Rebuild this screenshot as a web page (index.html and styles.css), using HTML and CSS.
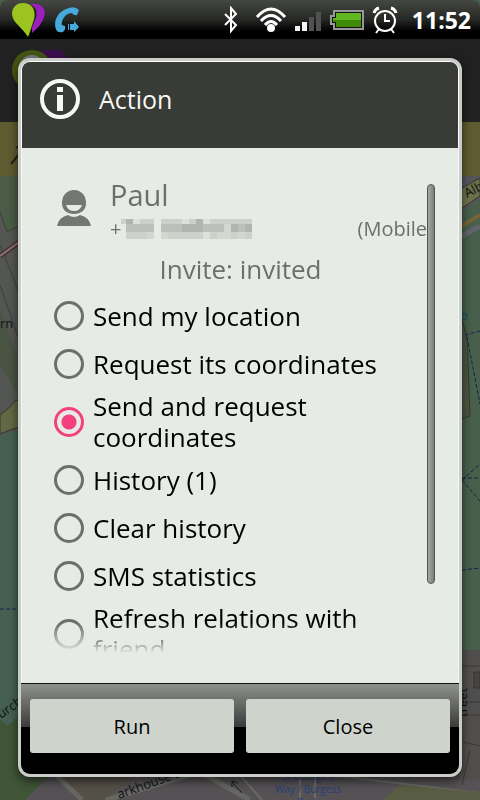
FILE: index.html
```html
<!doctype html>
<html lang="en">
<head>
  <meta charset="utf-8">
  <meta name="viewport" content="width=device-width, initial-scale=1">
  <title>Action</title>
  <link rel="stylesheet" href="styles.css">
</head>
<body>
  <svg class="backdrop" viewBox="0 0 480 800" preserveAspectRatio="xMidYMid slice" aria-hidden="true">
    <rect width="480" height="800" fill="#475f4b"/>
    <!-- map, left edge -->
    <path d="M0 176H40V440H0z" fill="#545653"/>
    <path d="M0 176H40V222L7 232L0 212z" fill="#4a5c46"/>
    <path d="M0 212L7 232L40 215M0 245L40 345M0 285L26 360" fill="none" stroke="#3a4038"/>
    <path d="M0 310L30 390L30 415L0 365z" fill="#4a5443"/>
    <path d="M0 256L22 240" stroke="#4c2e2e" stroke-width="5"/>
    <path d="M0 256L22 240" stroke="#807878" stroke-width="2"/>
    <path d="M0 415L10 407L15 401L30 396V424L10 430L0 434z" fill="#626744" stroke="#353b28"/>
    <path d="M0 436L30 425V800H0z" fill="#456052"/>
    <path d="M0 609H22" stroke="#1c2450" stroke-width="1" stroke-dasharray="4 2"/>
    <path d="M0 732L24 712V800H0z" fill="#3f5536"/>
    <!-- map, bottom -->
    <path d="M48 765H480V800H24z" fill="#555155"/>
    <path d="M0 720L60 765L25 800H0z" fill="#3f5536"/>
    <path d="M60 774H135L105 800H75z" fill="#555047"/>
    <path d="M56 775L82 800M106 800L200 772L250 800" fill="none" stroke="#656862" stroke-width="5"/>
    <path d="M240 775L262 800M300 775V800M315 775V800M330 775L480 793" fill="none" stroke="#686a66" stroke-width="2"/>
    <path d="M400 785L480 792V800H382z" fill="#595d43"/>
    <!-- map, right edge -->
    <path d="M455 176H480V200L455 215z" fill="#56545d"/>
    <path d="M455 192L480 178V196L455 213z" fill="#6d714b" stroke="#34382b"/>
    <path d="M455 230L480 215" stroke="#766337" stroke-width="4"/>
    <path d="M455 240L480 226" stroke="#64636b" stroke-width="5"/>
    <path d="M455 293L467 338L470 416L455 421" fill="#4c5541" stroke="#34392e"/>
    <path d="M465 335L480 331M467 337L480 404M462 480L480 464M462 480L480 501M462 478H480M462 570L480 568" fill="none" stroke="#17204c" stroke-width="1" stroke-dasharray="4 2"/>
    <path d="M455 650H480V780H455z" fill="#504f4d"/>
    <path d="M455 666H480M455 702H480M455 715H480M463 742L480 746M470 750L462 785" fill="none" stroke="#3a3b38"/>
    <path d="M474 672H480V688H474z" fill="#49443f" stroke="#34312e"/>
    <g class="map-text">
      <text x="0" y="328">rn</text>
      <text x="467" y="198" transform="rotate(-27 467 198)">Alb</text>
      <text x="460" y="320" fill="#114f63">b</text>
      <text x="1" y="719" transform="rotate(-35 1 719)">urch</text>
      <text x="119" y="799" transform="rotate(-20 119 799)">arkhouse St</text>
      <text x="467" y="717" transform="rotate(-90 467 717)">treet</text>
      <g class="map-place">
        <text x="308" y="780">St George's</text>
        <text x="308" y="793">Way / Burgess</text>
        <text x="308" y="806">Park</text>
      </g>
    </g>
    <path d="M242 793L232 782M232 787V781L238 783" fill="none" stroke="#1b1b1b" stroke-width="1"/>
    <!-- app bar and notice strip under the dialog -->
    <path d="M0 38H480V122H0z" fill="#212121"/>
    <path d="M42 50H60Q70 56 68 70H50z" fill="#3a0f4d"/>
    <circle cx="32" cy="70" r="20" fill="#445413"/>
    <circle cx="32" cy="68" r="13" fill="#777880"/>
    <path d="M0 122H480V176H0z" fill="#5f5b30"/>
    <path d="M11 164L20 153M16 148L22 144" stroke="#242318" stroke-width="2"/>
  </svg>

  <header class="status-bar">
    <svg class="app-icon" viewBox="0 0 34 36" role="img" aria-label="Friends">
      <path d="M20 2C30 0 36 7 33 15Q30 24 21 31z" fill="#9b20bd"/>
      <path d="M18 35Q17 28 11 22C3 14 5 2 14 2C25 2 28 10 24 18Q20 27 18 35z" fill="#20290d"/>
      <path d="M17 35Q14 30 5 21C-3 12 2 1 12 1C22 1 25 9 23 17Q20 27 17 35z" fill="#9bc421"/>
    </svg>
    <svg class="call-icon" viewBox="0 0 26 26" role="img" aria-label="Call forwarding">
      <path d="M3 24C-2 16 3 4 15 1Q21 -1 25 3L23 8Q20 9 18 6Q12 6 9 12Q7 16 8 18L11 19Q12 23 9 25Q5 26 3 24z" fill="#45a9dc"/>
      <path d="M14 17h1v6h-1zM16 17h4v-3l5 6-5 5v-2h-4z" fill="#45a9dc"/>
    </svg>
    <span class="spacer"></span>
    <svg class="bluetooth" viewBox="0 0 16 28" role="img" aria-label="Bluetooth">
      <path d="M2 8L13 19L8 25V2L13 8L2 19" fill="none" stroke="#fff" stroke-width="2"/>
    </svg>
    <svg class="wifi" viewBox="0 0 32 26" role="img" aria-label="Wi-Fi">
      <g fill="none" stroke="#fff" stroke-width="3">
        <path d="M2 10Q16 -6 30 10M6 14Q16 3 26 14M10 18Q16 11 22 18"/>
      </g>
      <circle cx="16" cy="21" r="4" fill="#fff"/>
    </svg>
    <svg class="signal" viewBox="0 0 27 20" role="img" aria-label="Signal">
      <path d="M0 15h5v5H0zM7 11h5v9H7z" fill="#f4f4f4"/>
      <path d="M14 6h5v14h-5zM21 1h5v19h-5z" fill="#515151"/>
    </svg>
    <svg class="battery" viewBox="0 0 34 20" role="img" aria-label="Battery">
      <path d="M4 1H33V19H4V14H1V6H4z" fill="#111" stroke="#999" stroke-width="2"/>
      <path d="M6 3H31V10H3V8H6z" fill="#62b821"/>
      <path d="M3 10H31V17H6V12H3z" fill="#408a08"/>
    </svg>
    <svg class="alarm" viewBox="0 0 26 28" role="img" aria-label="Alarm">
      <g fill="none" stroke="#fff" stroke-width="2">
        <circle cx="13" cy="15" r="10"/>
        <path d="M13 8V15H18M7 23L4 27M19 23L22 27"/>
        <path d="M2 7Q3 3 7 2M19 2Q23 3 24 7" stroke-width="3"/>
      </g>
    </svg>
    <time class="clock">11:52</time>
  </header>

  <main class="dialog" role="dialog" aria-labelledby="dialog-title">
    <div class="dialog-header">
      <svg class="info-icon" viewBox="0 0 42 42" aria-hidden="true">
        <circle cx="21" cy="21" r="18" fill="none" stroke="#f7f9f5" stroke-width="4"/>
        <path d="M18 9h6v5h-6zM18 17h6v16h-6z" fill="#f7f9f5"/>
      </svg>
      <h1 id="dialog-title">Action</h1>
    </div>

    <div class="dialog-body">
      <form class="scroll-area" id="action-form">
        <div class="contact">
          <svg class="avatar" viewBox="0 0 38 38" aria-hidden="true">
            <path fill-rule="evenodd" d="M20 0a12 12 0 0 1 12 13c0 7-5 11-12 11S8 20 8 13A12 12 0 0 1 20 0zM12 15q2 6 8 6t8-6z" fill="#727772"/>
            <path d="M3 36Q5 27 14 25Q20 29 26 25Q35 27 37 36z" fill="#727772"/>
          </svg>
          <div class="contact-text">
            <div class="name">Paul</div>
            <div class="phone">
              <span>+</span>
              <svg class="mosaic" viewBox="0 0 131 20" shape-rendering="crispEdges" role="img" aria-label="Hidden number">
                <path d="M0 0h33v20H5V5H0zM40 0h91v20H40z" fill="#ccd1cb"/>
                <path d="M5 5h28v8H5zM40 5h63v8H40zM110 5h21v8h-21z" fill="#bbc0ba"/>
                <path d="M5 0h7v5H5zM75 0h7v5h-7zM61 5h21v8H61zM110 5h7v8h-7zM124 5h7v8h-7z" fill="#b0b5af"/>
                <path d="M12 0h7v5h-7zM61 0h7v5h-7zM82 0h7v5h-7zM82 13h7v7h-7z" fill="#dce1da"/>
                <path d="M26 13h7v7h-7zM40 13h7v7h-7zM96 13h14v7H96zM103 5h7v8h-7zM117 13h7v7h-7z" fill="#d3d8d1"/>
              </svg>
              <span class="phone-type">(Mobile</span>
            </div>
          </div>
        </div>
        <p class="invite">Invite: invited</p>

        <label class="option"><input type="radio" name="action"><span>Send my location</span></label>
        <label class="option"><input type="radio" name="action"><span>Request its coordinates</span></label>
        <label class="option"><input type="radio" name="action" checked><span>Send and request coordinates</span></label>
        <label class="option"><input type="radio" name="action"><span>History (1)</span></label>
        <label class="option"><input type="radio" name="action"><span>Clear history</span></label>
        <label class="option"><input type="radio" name="action"><span>SMS statistics</span></label>
        <label class="option"><input type="radio" name="action"><span>Refresh relations with friend</span></label>
      </form>
      <div class="scroll-thumb"></div>
    </div>

    <div class="dialog-buttons">
      <button type="submit" form="action-form">Run</button>
      <button type="button">Close</button>
    </div>
  </main>
</body>
</html>
```
FILE: styles.css
```css
* { box-sizing: border-box; }

body {
  margin: 0;
  height: 100vh;
  display: flex;
  flex-direction: column;
  background: #212121;
  color: #000;
  font-family: "Open Sans", "Noto Sans", sans-serif;
  overflow: hidden;
}

.backdrop {
  position: absolute;
  inset: 0;
  width: 100%;
  height: 100%;
  z-index: -1;
}

.map-text {
  font-size: 13px;
  fill: #111;
}

.map-place {
  font-size: 10px;
  fill: #253f78;
  text-anchor: middle;
}

/* status bar */
.status-bar {
  display: flex;
  align-items: center;
  gap: 8px;
  height: 39px;
  padding: 0 9px 0 10px;
  flex: none;
  background: linear-gradient(#454743, #262825 50%, #000 80%);
  border-radius: 8px 8px 0 0;
}

.spacer { flex: 1; }
.app-icon { width: 36px; height: 36px; }
.call-icon { width: 26px; height: 26px; }
.bluetooth { width: 16px; height: 28px; margin-right: 8px; }
.wifi { width: 32px; height: 26px; }
.signal { width: 27px; height: 20px; margin-top: 3px; }
.battery { width: 34px; height: 20px; }
.alarm { width: 26px; height: 28px; }

.clock {
  margin-left: 6px;
  color: #fff;
  font-size: 23px;
  font-weight: bold;
}

/* dialog */
.dialog {
  flex: 1;
  min-height: 0;
  display: flex;
  flex-direction: column;
  margin: 19px 18px 23px;
  border: 3px solid #c9ccc7;
  border-radius: 12px;
  background: #e6ebe5;
  box-shadow: 0 4px 10px rgba(0, 0, 0, .6);
  overflow: hidden;
}

.dialog-header {
  display: flex;
  align-items: center;
  gap: 18px;
  height: 87px;
  padding: 0 17px 12px;
  flex: none;
  border: 1px solid #fff;
  border-bottom: 0;
  border-radius: 9px 9px 0 0;
  background: #383b36;
}

.info-icon { width: 42px; height: 42px; }

.dialog-header h1 {
  margin: 0;
  color: #f7f9f5;
  font-size: 25px;
  font-weight: normal;
}

.dialog-body {
  flex: 1;
  min-height: 0;
  display: flex;
  padding: 24px 23px 30px 32px;
  border: 1px solid #f5f8f4;
  border-width: 0 1px;
}

.scroll-area {
  flex: 1;
  min-width: 0;
  overflow: hidden;
  -webkit-mask-image: linear-gradient(#000 calc(100% - 30px), transparent);
  mask-image: linear-gradient(#000 calc(100% - 30px), transparent);
}

.scroll-thumb {
  width: 8px;
  height: 400px;
  margin-top: 12px;
  border: 1px solid #50534f;
  border-radius: 4px;
  background: linear-gradient(90deg, #a5a9a4, #7b7f7a);
}

.contact {
  display: flex;
  align-items: center;
  gap: 18px;
  color: #6b706a;
}

.avatar { width: 38px; height: 38px; }

.contact-text {
  flex: 1;
  padding-top: 6px;
}

.name {
  font-size: 29px;
  line-height: 34px;
}

.phone {
  display: flex;
  align-items: center;
  font-size: 20px;
  line-height: 34px;
}

.mosaic {
  width: 131px;
  height: 20px;
}

.phone-type { margin-left: auto; }

.invite {
  margin: 0;
  color: #6b706a;
  font-size: 26px;
  line-height: 46px;
  text-align: center;
}

/* options */
.option {
  display: flex;
  align-items: center;
  gap: 9px;
  min-height: 48px;
  padding: 3px 0;
  font-size: 26px;
  line-height: 31px;
}

.option input {
  appearance: none;
  flex: none;
  width: 30px;
  height: 30px;
  margin: 0;
  border: 3px solid #6b706a;
  border-radius: 50%;
}

.option input:checked {
  border-color: #f4407f;
  background: radial-gradient(circle, #f4407f 7px, transparent 8px);
}

/* buttons */
.dialog-buttons {
  display: flex;
  gap: 12px;
  height: 91px;
  padding: 15px 9px 21px;
  flex: none;
  border-top: 1px solid #111;
  background: linear-gradient(#8e928d, #3a3b3a 43px, #000 43px);
}

.dialog-buttons button {
  flex: 1;
  border: 0;
  border-radius: 3px;
  background: #ced3cc;
  color: #000;
  font: 20px "Open Sans", "Noto Sans", sans-serif;
}
```
